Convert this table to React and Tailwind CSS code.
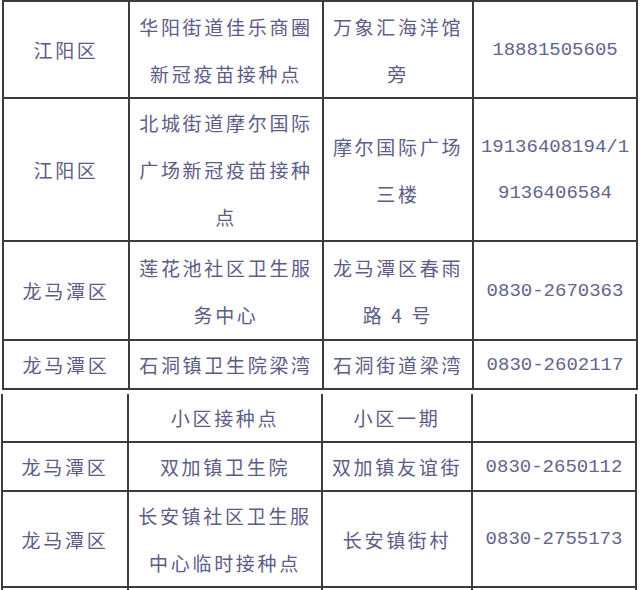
const cjk = { fontFamily: '"Noto Sans CJK SC", "Noto Sans", sans-serif' };

const topRows = [
  { h: "h-[97px]", area: "江阳区", site: ["华阳街道佳乐商圈", "新冠疫苗接种点"], addr: ["万象汇海洋馆", "旁"], tel: ["18881505605"] },
  { h: "h-[143px]", area: "江阳区", site: ["北城街道摩尔国际", "广场新冠疫苗接种", "点"], addr: ["摩尔国际广场", "三楼"], tel: ["19136408194/1", "9136406584"] },
  { h: "h-[99px]", area: "龙马潭区", site: ["莲花池社区卫生服", "务中心"], addr: ["龙马潭区春雨", "路 4 号"], tel: ["0830-2670363"] },
  { h: "h-[48px]", area: "龙马潭区", site: ["石洞镇卫生院梁湾"], addr: ["石洞街道梁湾"], tel: ["0830-2602117"] },
];

const bottomRows = [
  { h: "h-[48px]", area: "", site: ["小区接种点"], addr: ["小区一期"], tel: [] },
  { h: "h-[49px]", area: "龙马潭区", site: ["双加镇卫生院"], addr: ["双加镇友谊街"], tel: ["0830-2650112"] },
  { h: "h-[96px]", area: "龙马潭区", site: ["长安镇社区卫生服", "中心临时接种点"], addr: ["长安镇街村"], tel: ["0830-2755173"] },
  { h: "h-[48px]", area: "", site: [], addr: [], tel: [] },
];

function Lines({ items, mono }) {
  return items.map((t, i) => (
    <div
      key={i}
      className={mono ? "tracking-[0px] text-[19px] leading-[46px] text-[#64648c]" : "tracking-[2.7px] text-[19px] leading-[47px]"}
      style={mono ? { fontFamily: '"Liberation Mono", "Noto Sans CJK SC", monospace' } : undefined}
    >
      {t}
    </div>
  ));
}

function Sheet({ rows, top, className }) {
  return (
    <table className={"table-fixed border-collapse " + className} style={cjk}>
      <colgroup>
        <col className="w-[126px]" />
        <col className="w-[194px]" />
        <col className="w-[150px]" />
        <col className="w-[164px]" />
      </colgroup>
      <tbody>
        {rows.map((r, i) => (
          <tr key={i} className={r.h}>
            {[r.area ? [r.area] : [], r.site, r.addr, r.tel].map((c, j) => (
              <td
                key={j}
                className={
                  "border-2 border-[#3c3c3c] p-0 text-center align-middle text-[#5c5c86] " +
                  (!top && i === 0 ? "border-t-0" : "")
                }
              >
                <Lines items={c} mono={j === 3} />
              </td>
            ))}
          </tr>
        ))}
      </tbody>
    </table>
  );
}

export default function App() {
  return (
    <div className="w-[640px] h-[590px] overflow-hidden bg-white">
      <Sheet rows={topRows} top className="ml-[2px] w-[634px]" />
      <Sheet rows={bottomRows} className="ml-[1px] mt-[4px] w-[636px]" />
    </div>
  );
}
